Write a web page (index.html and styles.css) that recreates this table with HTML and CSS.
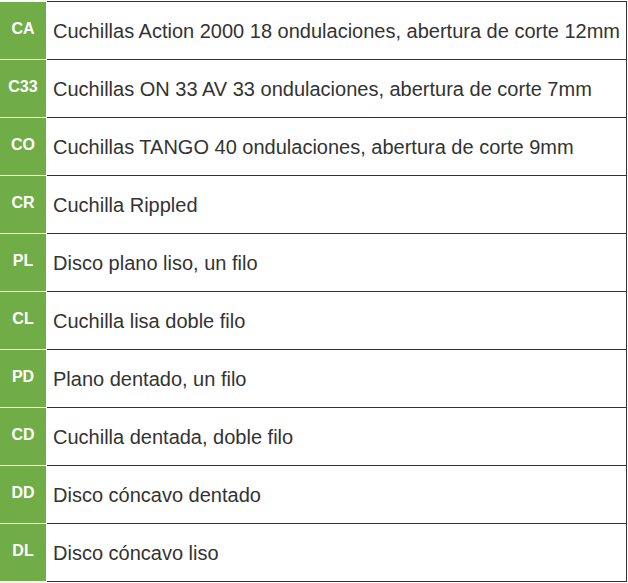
FILE: index.html
```html
<!DOCTYPE html>
<html lang="es">
<head>
<meta charset="utf-8">
<link rel="stylesheet" href="styles.css">
</head>
<body>
<div class="table">
  <div class="row"><div class="code">CA</div><div class="desc">Cuchillas Action 2000 18 ondulaciones, abertura de corte 12mm</div></div>
  <div class="row"><div class="code">C33</div><div class="desc">Cuchillas ON 33 AV 33 ondulaciones, abertura de corte 7mm</div></div>
  <div class="row"><div class="code">CO</div><div class="desc">Cuchillas TANGO 40 ondulaciones, abertura de corte 9mm</div></div>
  <div class="row"><div class="code">CR</div><div class="desc">Cuchilla Rippled</div></div>
  <div class="row"><div class="code">PL</div><div class="desc">Disco plano liso, un filo</div></div>
  <div class="row"><div class="code">CL</div><div class="desc">Cuchilla lisa doble filo</div></div>
  <div class="row"><div class="code">PD</div><div class="desc">Plano dentado, un filo</div></div>
  <div class="row"><div class="code">CD</div><div class="desc">Cuchilla dentada, doble filo</div></div>
  <div class="row"><div class="code">DD</div><div class="desc">Disco cóncavo dentado</div></div>
  <div class="row last"><div class="code">DL</div><div class="desc">Disco cóncavo liso</div></div>
</div>
</body>
</html>
```

FILE: styles.css
```css
html, body {
  margin: 0;
  padding: 0;
  background: #ffffff;
}
body {
  font-family: "Liberation Sans", Arial, sans-serif;
  color: #333333;
}
.table {
  width: 627px;
  margin-top: 1px;
  display: flex;
  flex-direction: column;
}
.row {
  display: flex;
  height: 58px;
  gap: 1px;
}
.row.last {
  height: 59px;
}
.code {
  width: 46px;
  margin-top: 1px;
  height: 57px;
  background: #70ad47;
  color: #ffffff;
  font-weight: bold;
  font-size: 16px;
  display: flex;
  align-items: center;
  justify-content: center;
  padding-bottom: 4px;
  box-sizing: border-box;
}
.desc {
  flex: 1;
  border-top: 1px solid #333333;
  border-right: 1px solid #333333;
  display: flex;
  align-items: center;
  padding-left: 6px;
  padding-top: 1px;
  font-size: 20px;
  box-sizing: border-box;
}
.row.last .desc {
  border-bottom: 1px solid #333333;
}
```
